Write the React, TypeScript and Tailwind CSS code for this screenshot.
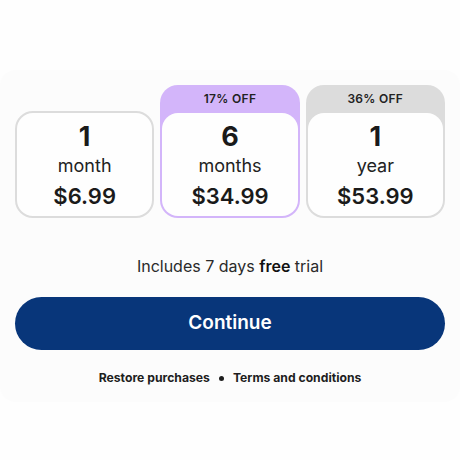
const PLANS = [
  { count: '1', unit: 'month', price: '$6.99', badge: null as string | null, tone: 'plain' },
  { count: '6', unit: 'months', price: '$34.99', badge: '17% OFF', tone: 'selected' },
  { count: '1', unit: 'year', price: '$53.99', badge: '36% OFF', tone: 'gray' },
]

function PlanBody({ count, unit, price }: { count: string; unit: string; price: string }) {
  return (
    <div className="flex flex-col items-center pt-[9px] pb-[6px] text-[#1a1a1a]">
      <span className="text-[27px] font-bold leading-[30px]">{count}</span>
      <span className="mt-px text-[18px] leading-[26px] text-[#222]">{unit}</span>
      <span className="mt-[3px] text-[22px] font-semibold leading-[28px]">{price}</span>
    </div>
  )
}

export default function App() {
  return (
    <main
      className="min-h-[460px] w-[460px] bg-[#fefefe]"
      style={{ fontFamily: 'Inter, "Noto Sans", sans-serif' }}
    >
      <div className="h-[70px]" />
      <div className="rounded-[16px] bg-[#fcfcfc] px-[15px] pt-[15px] pb-[16px]">
        <div className="flex items-end gap-[6px]">
          {PLANS.map((p, i) => {
            if (!p.badge) {
              return (
                <div key={i} className="flex-1 rounded-[18px] border-2 border-[#dcdcdc] bg-[#fefefe]">
                  <PlanBody {...p} />
                </div>
              )
            }
            const selected = p.tone === 'selected'
            return (
              <div
                key={i}
                className={
                  'flex-1 rounded-[18px] px-[2px] pb-[2px] ' +
                  (selected ? 'bg-[#d3b5fa]' : 'bg-[#dcdcdc]')
                }
              >
                <div className="flex h-[28px] items-center justify-center text-[12px] font-semibold tracking-[0.3px] text-[#222]">
                  {p.badge}
                </div>
                <div className="rounded-[16px] bg-[#fefefe]">
                  <PlanBody {...p} />
                </div>
              </div>
            )
          })}
        </div>

        <p className="mt-[36px] text-center text-[16px] leading-[24px] text-[#2a2a2a]">
          Includes 7 days <span className="font-semibold text-[#111]">free</span> trial
        </p>

        <button className="mt-[19px] flex h-[53px] w-full items-center justify-center rounded-full bg-[#08367a] text-[19px] font-semibold text-white">
          Continue
        </button>

        <div className="mt-[20px] flex items-center justify-center gap-[9px] text-[12.2px] font-bold leading-[16px] text-[#1e1e1e]">
          <span>Restore purchases</span>
          <span className="h-[5px] w-[5px] rounded-full bg-[#1e1e1e]" />
          <span>Terms and conditions</span>
        </div>
      </div>
    </main>
  )
}
